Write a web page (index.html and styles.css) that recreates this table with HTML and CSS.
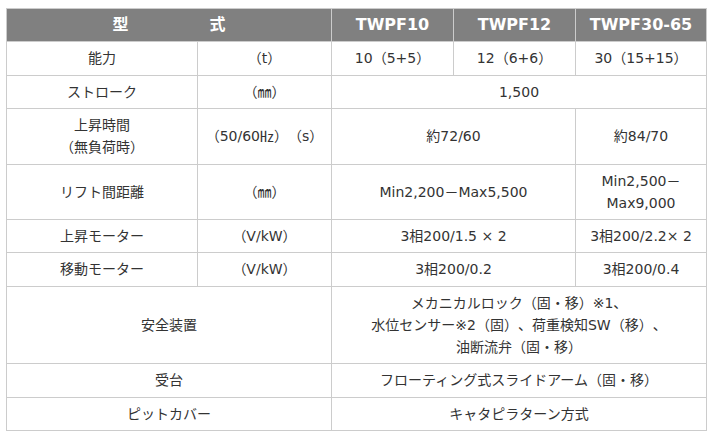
FILE: index.html
```html
<!DOCTYPE html>
<html lang="ja">
<head>
<meta charset="utf-8">
<link rel="stylesheet" href="styles.css">
</head>
<body>
<table class="spec">
  <colgroup>
    <col class="c1"><col class="c2"><col class="c3"><col class="c4"><col class="c5">
  </colgroup>
  <tr class="head">
    <th colspan="2"><span class="k1">型</span><span>式</span></th>
    <th>TWPF10</th>
    <th>TWPF12</th>
    <th>TWPF30-65</th>
  </tr>
  <tr>
    <td>能力</td><td>（t）</td>
    <td>10（5+5）</td><td>12（6+6）</td><td>30（15+15）</td>
  </tr>
  <tr>
    <td>ストローク</td><td>（㎜）</td>
    <td colspan="3">1,500</td>
  </tr>
  <tr>
    <td>上昇時間<br>（無負荷時）</td><td>（50/60㎐）（s）</td>
    <td colspan="2">約72/60</td><td>約84/70</td>
  </tr>
  <tr>
    <td>リフト間距離</td><td>（㎜）</td>
    <td colspan="2">Min2,200－Max5,500</td><td>Min2,500－<br>Max9,000</td>
  </tr>
  <tr>
    <td>上昇モーター</td><td>（V/kW）</td>
    <td colspan="2">3相200/1.5 × 2</td><td>3相200/2.2× 2</td>
  </tr>
  <tr>
    <td>移動モーター</td><td>（V/kW）</td>
    <td colspan="2">3相200/0.2</td><td>3相200/0.4</td>
  </tr>
  <tr>
    <td colspan="2">安全装置</td>
    <td colspan="3">メカニカルロック（固・移）※1、<br>水位センサー※2（固）、荷重検知SW（移）、<br>油断流弁（固・移）</td>
  </tr>
  <tr>
    <td colspan="2">受台</td>
    <td colspan="3">フローティング式スライドアーム（固・移）</td>
  </tr>
  <tr>
    <td colspan="2">ピットカバー</td>
    <td colspan="3">キャタピラターン方式</td>
  </tr>
</table>
</body>
</html>
```

FILE: styles.css
```css
html, body {
  background: #ffffff;
}
body {
  margin: 8px 0 0 6px;
  font-family: "DejaVu Sans", "Noto Sans CJK JP", sans-serif;
  color: #333333;
  text-spacing-trim: space-all;
}
.spec {
  border-collapse: collapse;
  table-layout: fixed;
  width: 700px;
}
.c1 { width: 191px; }
.c2 { width: 134px; }
.c3 { width: 122px; }
.c4 { width: 122px; }
.c5 { width: 131px; }
.spec th,
.spec td {
  border: 1px solid #cccccc;
  text-align: center;
  vertical-align: middle;
  font-size: 14px;
  line-height: 22px;
  padding: 5px 4px 5.4px;
  text-spacing-trim: space-all;
}
.spec th {
  background: #808080;
  color: #ffffff;
  font-weight: bold;
  font-size: 16px;
}
.k1 {
  margin-right: 81px;
}
```
